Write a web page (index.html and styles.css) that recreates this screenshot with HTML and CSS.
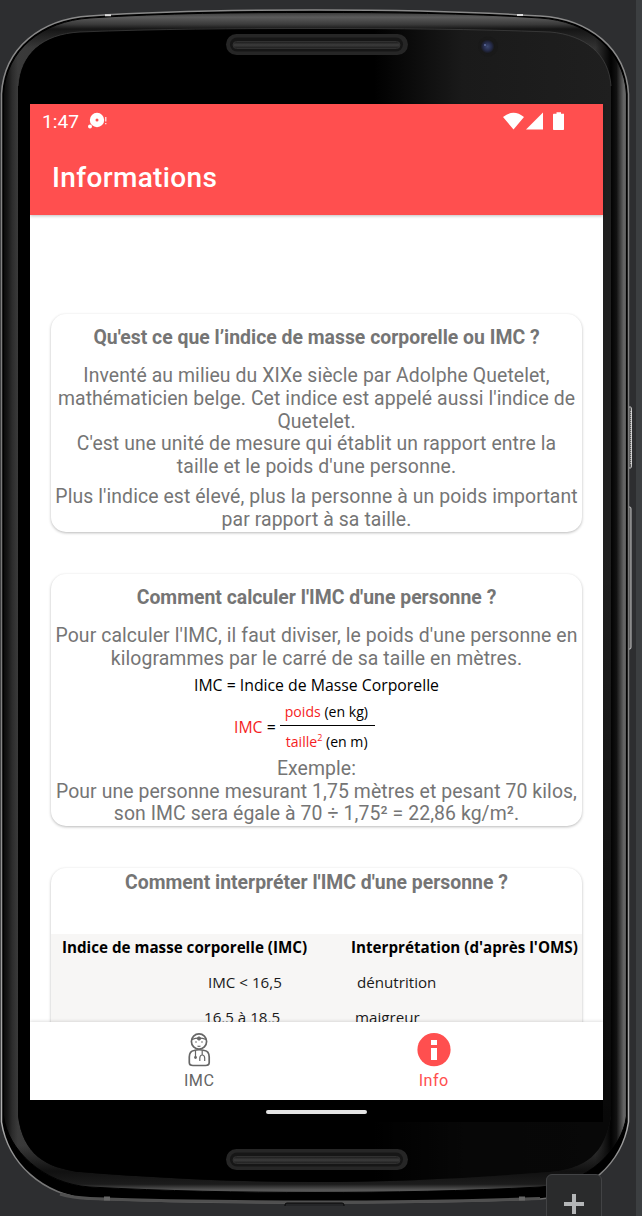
FILE: index.html
```html
<!DOCTYPE html>
<html lang="fr">
<head>
<meta charset="utf-8">
<title>Informations</title>
<link rel="stylesheet" href="styles.css">
</head>
<body>
<div class="stage">
  <svg class="device" viewBox="0 0 642 1216" aria-hidden="true">
    <defs>
      <linearGradient id="rim" x1="0" x2="1" y1="0" y2="0">
        <stop offset="0" stop-color="#0a0a0a"/><stop offset=".006" stop-color="#151515"/><stop offset=".014" stop-color="#2c2c2c"/><stop offset=".023" stop-color="#3a3a3a"/>
        <stop offset=".05" stop-color="#383838"/><stop offset=".5" stop-color="#4c4c4c"/>
        <stop offset=".95" stop-color="#333"/><stop offset=".975" stop-color="#020202"/><stop offset=".984" stop-color="#111"/><stop offset=".996" stop-color="#686868"/><stop offset="1" stop-color="#555"/>
      </linearGradient>
      <linearGradient id="rimY" x1="0" x2="0" y1="0" y2="1">
        <stop offset="0" stop-color="#3a3a3a"/><stop offset=".004" stop-color="#5c5c5c"/><stop offset=".01" stop-color="#3a3a3a" stop-opacity=".9"/><stop offset=".014" stop-color="#111" stop-opacity=".9"/>
        <stop offset=".03" stop-color="#111" stop-opacity="0"/><stop offset=".96" stop-color="#111" stop-opacity="0"/>
        <stop offset=".982" stop-color="#0c0c0c" stop-opacity=".9"/><stop offset=".993" stop-color="#1c1c1c"/><stop offset=".998" stop-color="#5a5a5a"/><stop offset="1" stop-color="#444"/>
      </linearGradient>
      <linearGradient id="edge" x1="0" x2="0" y1="0" y2="1">
        <stop offset="0" stop-color="#8a8a8a"/><stop offset=".5" stop-color="#777"/><stop offset=".93" stop-color="#b0b0b0"/><stop offset="1" stop-color="#666"/>
      </linearGradient>
      <linearGradient id="shine" x1="0" x2="1" y1="0" y2="0">
        <stop offset=".6" stop-color="#000"/><stop offset=".75" stop-color="#1a1a1a"/><stop offset="1" stop-color="#1f1f1f"/>
      </linearGradient>
      <linearGradient id="fade" x1="0" x2="0" y1="0" y2="1">
        <stop offset=".45" stop-color="#000" stop-opacity="0"/><stop offset=".95" stop-color="#000" stop-opacity=".75"/>
      </linearGradient>
      <linearGradient id="slot" x1="0" x2="0" y1="0" y2="1">
        <stop offset="0" stop-color="#1a1a1a"/><stop offset=".5" stop-color="#3c3c3c"/><stop offset="1" stop-color="#1c1c1c"/>
      </linearGradient>
      <radialGradient id="lens"><stop offset="0" stop-color="#3c4870"/><stop offset=".6" stop-color="#242a48"/><stop offset="1" stop-color="#171717"/></radialGradient>
    </defs>
    <rect x="636" width="6" height="1216" fill="#3c3f41"/>
    <path d="M628 407h2.500q1 0 1 2v57q0 2-1 2H628M628 507h2q1 0 1 2v138q0 2-1 2H628" fill="#555" stroke="#c4c4c4"/>
    <path d="M631 411v53" stroke="#eee" stroke-dasharray="1 1" />
    <path d="M1.500 94C4 48 41 19 90 16C165 11 240 10 315 10C390 10 465 11 540 16C589 19 626 48 628.500 94V1122C622 1163 588 1195 540 1199C465 1202 390 1203 315 1203C240 1203 165 1202 90 1199C42 1195 8 1163 1.500 1122Z" fill="#000" stroke="url(#edge)" stroke-width="1.500"/>
    <path d="M60 1194C70 1197 80 1198 90 1198.500C165 1201 240 1202 315 1202C390 1202 465 1201 540 1198.500" fill="none" stroke="#505050" stroke-width="3"/>
    <path d="M3.500 94C6 50 42 21 90 18C165 13 240 12.500 315 12.500C390 12.500 465 13 540 18C588 21 624 50 626.500 94V1116C622 1150 587 1184 540 1187C465 1191 390 1192.500 315 1192.500C240 1192.500 165 1191 90 1187C43 1184 8 1150 3.500 1116Z" fill="url(#rim)"/>
    <path d="M3.500 94C6 50 42 21 90 18C165 13 240 12.500 315 12.500C390 12.500 465 13 540 18C588 21 624 50 626.500 94V1116C622 1150 587 1184 540 1187C465 1191 390 1192.500 315 1192.500C240 1192.500 165 1191 90 1187C43 1184 8 1150 3.500 1116Z" fill="url(#rimY)" stroke="#000"/>
    <path d="M18 86C20 54 42 34 80 32C155 29 235 28.500 315 28.500C395 28.500 475 29 550 32C585 35 609 54 611 86V1116C605 1154 585 1169 550 1172C475 1178 395 1182 315 1182C235 1182 155 1178 80 1172C45 1168 23 1154 18 1116Z" fill="url(#shine)"/>
    <path d="M18 86C20 54 42 34 80 32C155 29 235 28.500 315 28.500C395 28.500 475 29 550 32C585 35 609 54 611 86V1116C605 1154 585 1169 550 1172C475 1178 395 1182 315 1182C235 1182 155 1178 80 1172C45 1168 23 1154 18 1116Z" fill="url(#fade)"/>
    <path d="M18 86C20 54 42 34 80 32C155 29 235 28.500 315 28.500C395 28.500 475 29 550 32C585 35 609 54 611 86" fill="none" stroke="#444" stroke-width=".7"/>
    <path d="M105 15.200h6M517 15h6" stroke="#ddd" stroke-width="2"/>
    <path d="M104 1198.500h6M519 1198.500h6" stroke="#666" stroke-width="4"/>
    <path d="M285 1206v-1q0-2 2-2h55q2 0 2 2v1" fill="#242527" stroke="#080808"/>
    <rect x="226" y="34" width="182" height="21" rx="10.500" fill="#262626"/>
    <rect x="230" y="37.500" width="173" height="14" rx="7" fill="#161616"/>
    <rect x="233" y="41.500" width="167" height="7" rx="3.500" fill="url(#slot)" stroke="#303030"/>
    <rect x="226" y="1149" width="182" height="21" rx="10.500" fill="#262626"/>
    <rect x="230" y="1152.500" width="173" height="14" rx="7" fill="#161616"/>
    <rect x="233" y="1156.500" width="167" height="7" rx="3.500" fill="url(#slot)" stroke="#303030"/>
    <circle cx="488" cy="46.500" r="10" fill="#191919"/>
    <circle cx="487.500" cy="46.500" r="7" fill="url(#lens)"/>
    <circle cx="485" cy="45" r="1" fill="#5e6b9c"/>
  </svg>

  <main class="screen">
    <header class="topbar">
      <div class="status">
        <span class="clock">1:47</span>
        <svg class="notice" width="20" height="18" viewBox="0 0 20 18"><circle cx="9" cy="8" r="7.200" fill="#fff"/><circle cx="9" cy="8" r="1.500" fill="#ff4f4f"/><circle cx="2" cy="14.500" r="2" fill="#fff"/><path d="M17.800 5v4.500M17.800 11v1.200" stroke="#fff" stroke-width="1.100"/></svg>
        <svg class="signals" width="62" height="18" viewBox="0 0 62 18" fill="#fff"><path d="M0 5Q10.500-3.500 21 5L10.500 17.500ZM23 17.500L40 .5V17.500ZM50.500 1.800H53.500V.3H58V1.800H61V17.300q0 .7-.7.700H50.700q-.7 0-.7-.7V2.500Z"/></svg>
      </div>
      <h1 class="title">Informations</h1>
    </header>

    <div class="scroll">
      <section class="card">
        <h2 class="heading">Qu'est ce que l’indice de masse corporelle ou IMC ?</h2>
        <p class="copy">Inventé au milieu du XIXe siècle par Adolphe Quetelet,<br>mathématicien belge. Cet indice est appelé aussi l'indice de<br>Quetelet.<br>C'est une unité de mesure qui établit un rapport entre la<br>taille et le poids d'une personne.</p>
        <p class="copy copy-spaced">Plus l'indice est élevé, plus la personne à un poids important<br>par rapport à sa taille.</p>
      </section>

      <section class="card card-formula">
        <h2 class="heading">Comment calculer l'IMC d'une personne ?</h2>
        <p class="copy">Pour calculer l'IMC, il faut diviser, le poids d'une personne en<br>kilogrammes par le carré de sa taille en mètres.</p>
        <div class="formula">
          <p class="legend">IMC = Indice de Masse Corporelle</p>
          <div class="equation">
            <span class="left"><span class="red">IMC</span> =</span>
            <span class="fraction">
              <span class="num"><span class="red">poids</span> (en kg)</span>
              <span class="den"><span class="red">taille<sup>2</sup></span> (en m)</span>
            </span>
          </div>
        </div>
        <p class="copy">Exemple:<br>Pour une personne mesurant 1,75 mètres et pesant 70 kilos,<br>son IMC sera égale à 70 ÷ 1,75² = 22,86 kg/m².</p>
      </section>

      <section class="card card-table">
        <h2 class="heading">Comment interpréter l'IMC d'une personne ?</h2>
        <div class="table">
          <b class="th">Indice de masse corporelle (IMC)</b><b class="th th-right">Interprétation (d'après l'OMS)</b>
          <span class="range">IMC &lt; 16,5</span><span class="meaning">dénutrition</span>
          <span class="range range-wide">16,5 à 18,5</span><span class="meaning meaning-wide">maigreur</span>
        </div>
      </section>
    </div>

    <nav class="tabs">
      <a class="tab">
        <svg width="34" height="34" viewBox="0 0 34 34" fill="none" stroke="#666" stroke-width="1.700"><circle cx="17" cy="8.500" r="7.600"/><path d="M9.500 6.600Q17 3.800 24.500 6.600M15.500 13Q17 13.800 18.500 13" stroke-width="1.300"/><path d="M12 17.500Q7.500 18 7.300 24V29.500Q7.300 32.500 11 32.500H23.500Q27.200 32.500 27.200 29.500V24Q27 18 22.500 17.500Q17 16 12 17.500Z"/><path d="M13.500 17.500V24M20.200 17.500V22M17.800 28V25Q18 22 20.200 22Q22.500 22 22.700 25V28" stroke-width="1.200"/><circle cx="17" cy="5.500" r="1.600" fill="#666" stroke-width="1"/><circle cx="13.500" cy="24.500" r="1.400" fill="#666" stroke="none"/><circle cx="14" cy="9" r=".8" fill="#666" stroke="none"/><circle cx="20" cy="9" r=".8" fill="#666" stroke="none"/></svg>
        <span>IMC</span>
      </a>
      <a class="tab tab-on">
        <svg width="34" height="34" viewBox="0 0 34 34"><circle cx="17" cy="16.700" r="16.600" fill="#ff4f4f"/><path d="M14 7h6v5h-6zM14 15h6v12h-6z" fill="#fff"/></svg>
        <span>Info</span>
      </a>
    </nav>
    <div class="gesture"><span class="pill"></span></div>
  </main>

  <div class="zoom-in"><svg width="20" height="20" viewBox="0 0 20 20"><path d="M10 0v20M0 10h20" stroke="#b4b6b8" stroke-width="4"/></svg></div>
</div>
</body>
</html>
```
FILE: styles.css
```css
* { box-sizing: border-box; }
body { margin: 0; background: #2d2e30; font-family: Roboto, "Noto Sans", sans-serif; }
h1, h2, p { margin: 0; font-size: inherit; }
.stage { position: relative; width: 642px; height: 1216px; padding: 104px 0 0 30px; overflow: hidden; }
.device { position: absolute; inset: 0; width: 642px; height: 1216px; }
.screen { position: relative; width: 573px; height: 1018px; display: flex; flex-direction: column; background: #fff; }

.topbar { position: relative; z-index: 1; height: 111px; flex: none; background: #ff4f4f; color: #fff; box-shadow: 0 1px 3px rgba(0, 0, 0, .25); }
.status { display: flex; height: 34px; padding: 0 38px 0 12px; align-items: center; }
.clock { width: 46px; font-size: 19.2px; letter-spacing: 0; padding-top: 1px; }
.notice { margin-top: -1px; }
.signals { margin-left: auto; }
.title { padding: 22px 0 0 22px; font-size: 28px; line-height: 36px; font-weight: 500; letter-spacing: .35px; }

.scroll { flex: 1; min-height: 0; overflow: hidden; padding: 99px 21px 0; display: flex; flex-direction: column; gap: 42px; }
.card { flex: none; height: 218px; border-radius: 15px; overflow: hidden; background: #fff; box-shadow: 0 1px 3px rgba(0, 0, 0, .28); text-align: center; color: #757575; white-space: nowrap; }
.heading { padding-top: 12px; font-size: 19.4px; line-height: 23px; font-weight: 700; }
.copy { margin: 16.3px 0 0; font-size: 19.4px; line-height: 22.7px; letter-spacing: .09px; }
.copy-spaced { margin-top: 7.5px; }
.card-formula { height: 252px; }
.card-formula .formula + .copy { margin-top: 0; }

.formula { height: 87.300px; color: #000; font-family: "Open Sans", "Noto Sans", sans-serif; }
.legend { padding-top: 3.500px; font-size: 15.8px; line-height: 22px; }
.equation { display: flex; align-items: center; padding-left: 183px; height: 62px; gap: 4px; font-size: 15.8px; }
.left { margin-top: 0; }
.fraction { width: 95px; font-size: 14.100px; text-align: left; }
.num, .den { display: block; height: 29px; line-height: 29px; padding-left: 5px; }
.num { border-bottom: 1.5px solid #000; }
.den { height: 31px; line-height: 31px; padding-left: 6px; }
.den sup { font-size: 9px; line-height: 0; vertical-align: 6.5px; }
.red { color: #f51d24; }

.card-table { height: 400px; }
.card-table .heading { padding-top: 3px; }
.table { display: grid; grid-template-columns: 300px 1fr; grid-auto-rows: 35px; margin-top: 40px; height: 334px; background: #f7f6f5; color: #1a1a1a; font-family: "Open Sans", "Noto Sans", sans-serif; font-size: 15.15px; line-height: 27px; text-align: left; }
.th { padding-left: 11px; color: #000; font-size: 15.2px; }
.th-right { padding-left: 0; }
.range { padding-left: 157px; }
.range-wide { padding-left: 153px; }
.meaning { padding-left: 6px; }
.meaning-wide { padding-left: 4px; }

.tabs { position: relative; flex: none; height: 78px; display: flex; padding: 0 52px; background: #fff; box-shadow: 0 -1px 3px rgba(0, 0, 0, .12); }
.tab { flex: 1; display: flex; flex-direction: column; align-items: center; padding-top: 11px; color: #666; font-size: 16.2px; line-height: 20px; letter-spacing: .5px; gap: 4px; }
.tab-on { color: #ff4f4f; }
.gesture { flex: none; height: 22px; background: #000; display: flex; justify-content: center; align-items: center; padding-top: 1px; }
.pill { width: 101px; height: 4px; border-radius: 2px; background: #e4e4e4; }
.zoom-in { position: absolute; left: 546px; top: 1174px; width: 56px; height: 56px; padding: 19px 0 0 17px; border: 1px solid #424345; border-radius: 6px; background: #2a2b2c; }
```
